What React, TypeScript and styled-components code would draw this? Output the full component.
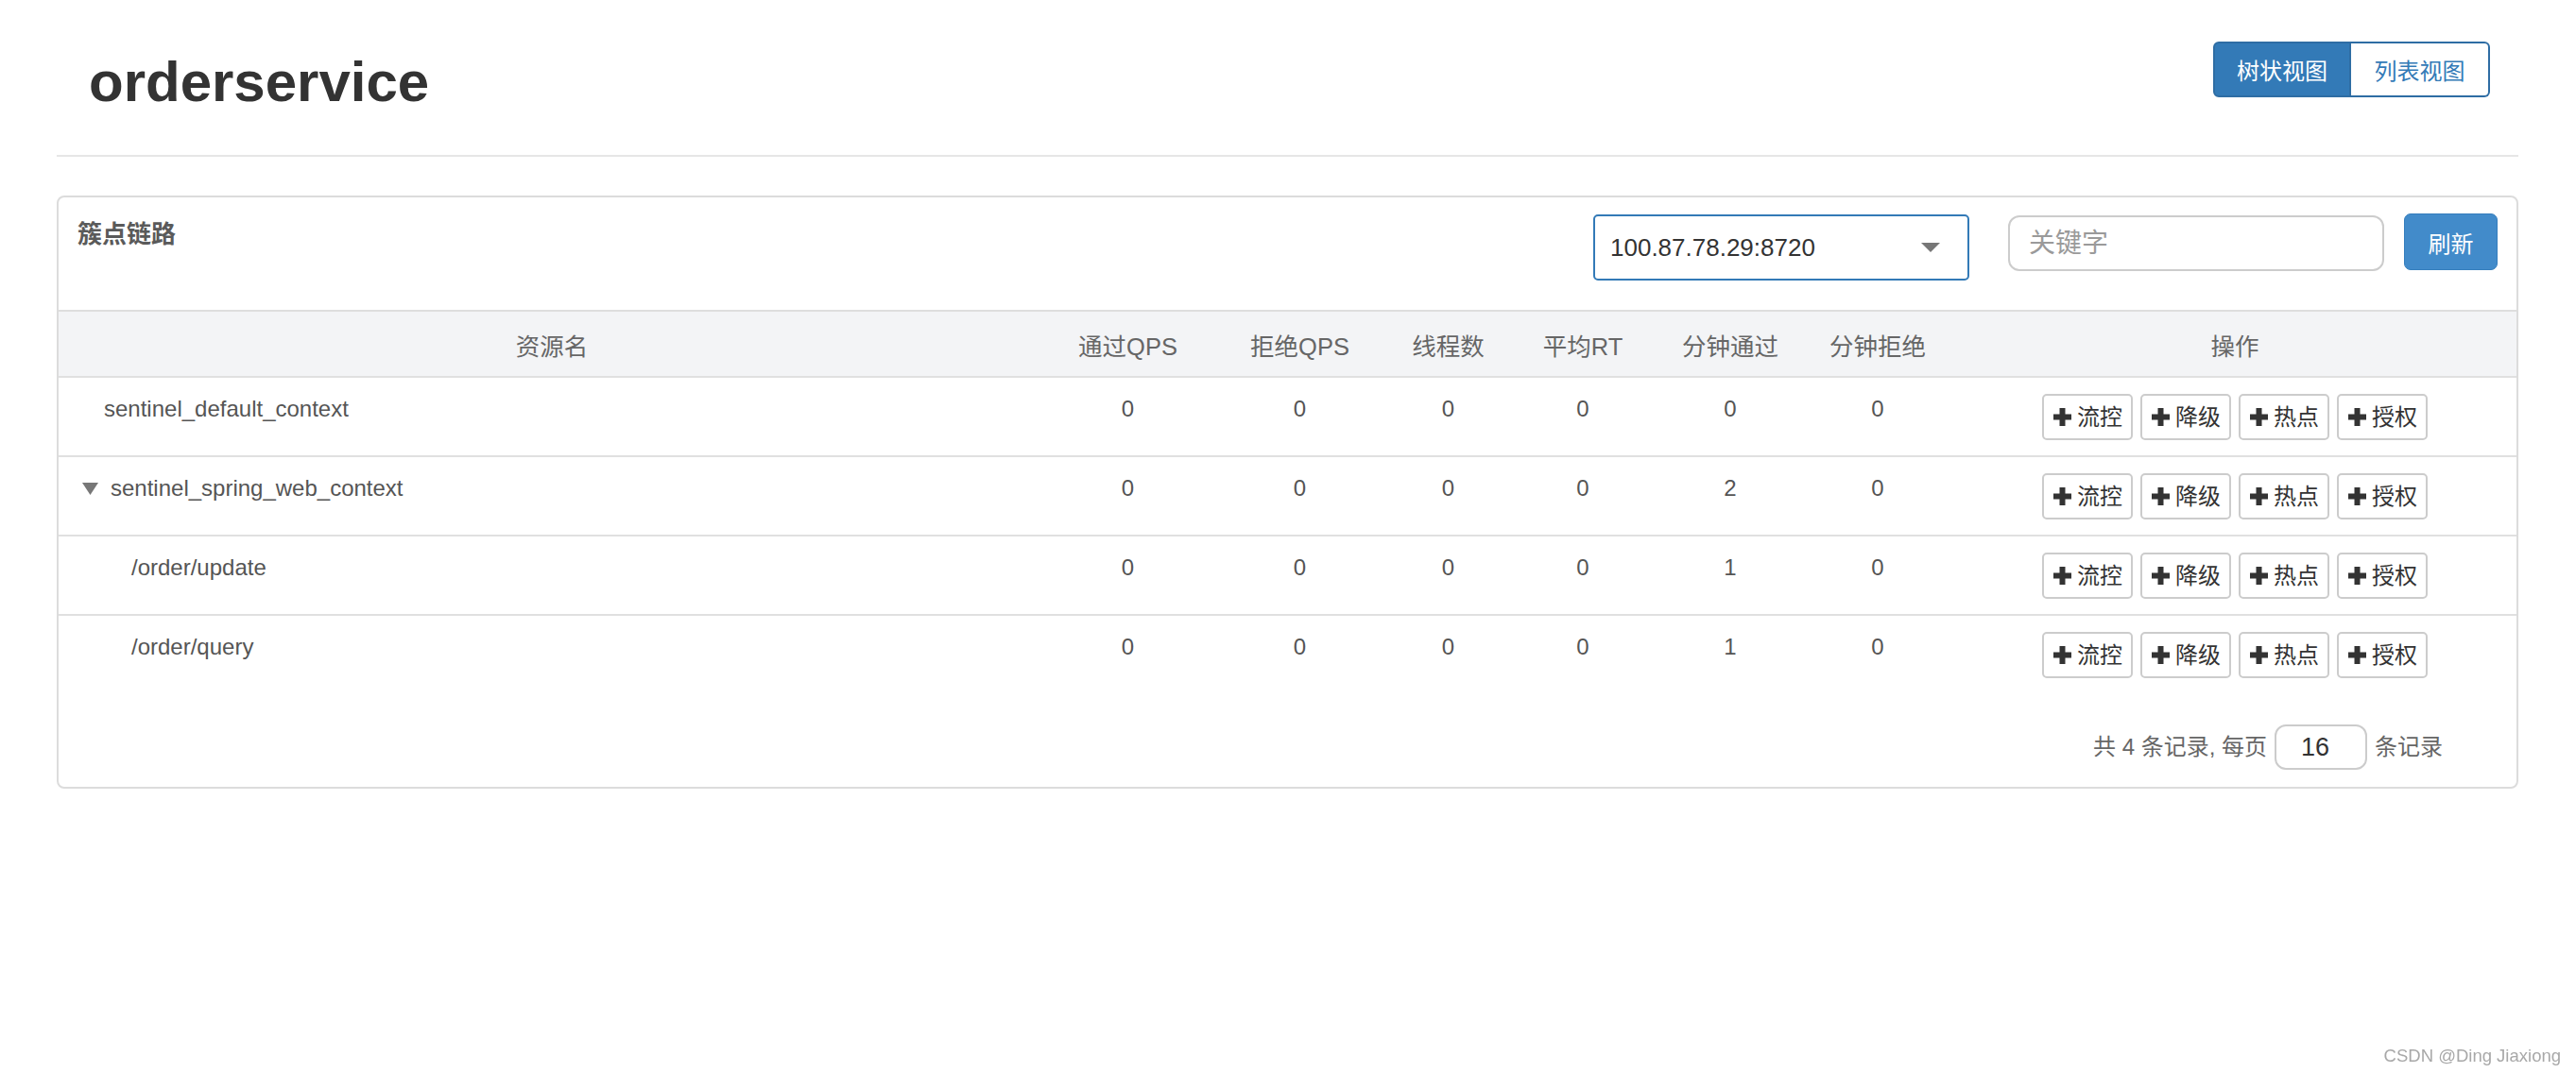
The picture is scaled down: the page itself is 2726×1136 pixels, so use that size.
import React from "react";
import styled, { createGlobalStyle } from "styled-components";

const GlobalStyle = createGlobalStyle`
  *, *::before, *::after {
    box-sizing: border-box;
  }
  body {
    margin: 0;
    background: #fff;
    color: #333;
    font-family: "Liberation Sans", "Noto Sans CJK SC", sans-serif;
  }
`;

// column widths of the resource table (name, 6 metrics, actions)
const COLUMNS = "1044px 175px 189px 125px 160px 152px 160px 1fr";

const Page = styled.div`
  width: 2726px;
  padding: 0 61px 0 60px;
`;

const Header = styled.header`
  display: flex;
  justify-content: space-between;
  align-items: flex-start;
  height: 166px;
  border-bottom: 2px solid #e6e6e6;
`;

const Title = styled.h1`
  margin: 54px 0 0 34px;
  font-size: 60px;
  line-height: 66px;
  font-weight: bold;
  color: #333;
`;

const ViewSwitch = styled.div`
  display: flex;
  margin: 44px 30px 0 0;
`;

const ViewButton = styled.button<{ $active?: boolean }>`
  width: 147px;
  height: 59px;
  font: inherit;
  font-size: 24px;
  border: 2px solid #2e6da4;
  background: ${p => (p.$active ? "#337ab7" : "#fff")};
  color: ${p => (p.$active ? "#fff" : "#337ab7")};
  &:first-child {
    width: 146px;
    border-radius: 6px 0 0 6px;
  }
  &:last-child {
    border-left: none;
    border-radius: 0 6px 6px 0;
  }
`;

const Card = styled.section`
  margin-top: 41px;
  border: 2px solid #dcdcdc;
  border-radius: 8px;
`;

const CardHeading = styled.div`
  display: flex;
  align-items: flex-start;
  height: 121px;
  padding: 17px 20px 0 20px;
  border-bottom: 2px solid #dedede;
`;

const CardTitle = styled.h3`
  margin: 4px 0 0 0;
  font-size: 26px;
  line-height: 36px;
  font-weight: bold;
  color: #5a5a5a;
`;

const Controls = styled.div`
  display: flex;
  align-items: flex-start;
  margin-left: auto;
`;

const MachineSelect = styled.div`
  display: flex;
  align-items: center;
  justify-content: space-between;
  width: 398px;
  height: 70px;
  margin-top: 1px;
  padding: 0 29px 0 16px;
  border: 2px solid #337ab7;
  border-radius: 5px;
  font-size: 26px;
  color: #333;
`;

const SearchInput = styled.input`
  width: 398px;
  height: 59px;
  margin: 2px 0 0 41px;
  padding: 0 20px;
  border: 2px solid #cccccc;
  border-radius: 12px;
  font: inherit;
  font-size: 28px;
  color: #333;
  outline: none;
  &::placeholder {
    color: #9a9a9a;
  }
`;

const RefreshButton = styled.button`
  width: 99px;
  height: 60px;
  margin-left: 21px;
  border: 1px solid #357ebd;
  border-radius: 7px;
  background: #428bca;
  color: #fff;
  font: inherit;
  font-size: 24px;
`;

const TableHead = styled.div`
  display: grid;
  grid-template-columns: ${COLUMNS};
  align-items: center;
  height: 68px;
  background: #f3f4f6;
  font-size: 25.5px;
  color: #666;
  text-align: center;
`;

const Row = styled.div`
  display: grid;
  grid-template-columns: ${COLUMNS};
  align-items: start;
  padding: 17px 0 16px;
  border-top: 2px solid #e0e0e0;
  font-size: 24px;
  line-height: 32px;
  color: #555;
`;

const NameCell = styled.div<{ $indent: number }>`
  display: flex;
  align-items: center;
  padding-left: ${p => p.$indent}px;
`;

const ValueCell = styled.div`
  text-align: center;
`;

const Actions = styled.div`
  display: flex;
  justify-content: center;
  gap: 8px;
`;

const ActionButton = styled.button`
  display: flex;
  align-items: center;
  gap: 6px;
  height: 49px;
  padding: 0 9px 0 10px;
  border: 2px solid #cccccc;
  border-radius: 5px;
  background: #fff;
  color: #333;
  font: inherit;
  font-size: 24px;
`;

const Pagination = styled.div`
  display: flex;
  justify-content: flex-end;
  align-items: center;
  gap: 8px;
  padding: 33px 78px 18px 0;
  font-size: 24px;
  color: #666;
`;

const PageLabel = styled.span`
  margin-bottom: 5px;
`;

const PageSizeInput = styled.input`
  width: 98px;
  height: 48px;
  padding: 0 0 0 26px;
  border: 2px solid #cccccc;
  border-radius: 12px;
  font: inherit;
  font-size: 27px;
  color: #333;
  outline: none;
`;

const Watermark = styled.div`
  position: fixed;
  right: 16px;
  bottom: 9px;
  font-size: 18.5px;
  line-height: 18.5px;
  color: #a8a8a8;
`;

const PlusIcon = () => (
  <svg width="19" height="19" viewBox="0 0 19 19">
    <path d="M6.5 0h6v6.5H19v6h-6.5V19h-6v-6.5H0v-6h6.5z" fill="#333" />
  </svg>
);

const TreeArrow = () => (
  <svg width="17" height="13" viewBox="0 0 17 13" style={{ marginRight: 13 }}>
    <path d="M0 0h17L8.5 13z" fill="#777" />
  </svg>
);

const Caret = () => (
  <svg width="20" height="10" viewBox="0 0 20 10">
    <path d="M0 0h20L10 10z" fill="#777" />
  </svg>
);

const metricTitles = ["通过QPS", "拒绝QPS", "线程数", "平均RT", "分钟通过", "分钟拒绝"];
const actions = ["流控", "降级", "热点", "授权"];

const resources = [
  { name: "sentinel_default_context", indent: 48, expandable: false, values: [0, 0, 0, 0, 0, 0] },
  { name: "sentinel_spring_web_context", indent: 25, expandable: true, values: [0, 0, 0, 0, 2, 0] },
  { name: "/order/update", indent: 77, expandable: false, values: [0, 0, 0, 0, 1, 0] },
  { name: "/order/query", indent: 77, expandable: false, values: [0, 0, 0, 0, 1, 0] },
];

const App = () => {
  return (
    <>
      <GlobalStyle />
      <Page>
        <Header>
          <Title>orderservice</Title>
          <ViewSwitch>
            <ViewButton $active>树状视图</ViewButton>
            <ViewButton>列表视图</ViewButton>
          </ViewSwitch>
        </Header>

        <Card>
          <CardHeading>
            <CardTitle>簇点链路</CardTitle>
            <Controls>
              <MachineSelect>
                <span>100.87.78.29:8720</span>
                <Caret />
              </MachineSelect>
              <SearchInput type="text" placeholder="关键字" />
              <RefreshButton>刷新</RefreshButton>
            </Controls>
          </CardHeading>

          <TableHead>
            <div>资源名</div>
            {metricTitles.map(t => (
              <div key={t}>{t}</div>
            ))}
            <div>操作</div>
          </TableHead>

          {resources.map(r => (
            <Row key={r.name}>
              <NameCell $indent={r.indent}>
                {r.expandable && <TreeArrow />}
                <span>{r.name}</span>
              </NameCell>
              {r.values.map((v, i) => (
                <ValueCell key={i}>{v}</ValueCell>
              ))}
              <Actions>
                {actions.map(a => (
                  <ActionButton key={a}>
                    <PlusIcon />
                    {a}
                  </ActionButton>
                ))}
              </Actions>
            </Row>
          ))}

          <Pagination>
            <PageLabel>共 4 条记录, 每页</PageLabel>
            <PageSizeInput type="text" defaultValue="16" />
            <PageLabel>条记录</PageLabel>
          </Pagination>
        </Card>
      </Page>
      <Watermark>CSDN @Ding Jiaxiong</Watermark>
    </>
  );
};

export default App;
